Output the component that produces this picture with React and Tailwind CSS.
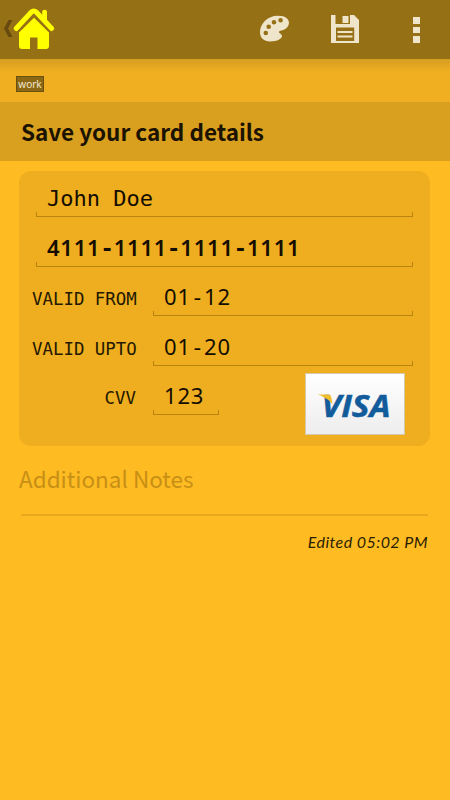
const Digits = ({ value }) => (
  <>
    {value.split(/(-)/).map((part, index) =>
      part === '-' ? (
        <span key={index} className="font-['DejaVu_Sans_Mono',monospace] tracking-normal">-</span>
      ) : (
        <span key={index}>{part}</span>
      )
    )}
  </>
);

// Holo style input, only the bottom edge with two short ticks
const Field = ({ children, className = '' }) => (
  <div className={`flex flex-col justify-end ${className}`}>
    <div className="-mb-[3px] whitespace-pre pl-[11px] leading-[30px] text-[#140d00]">{children}</div>
    <div className="h-[5px] border-x border-b border-[#b9830f]" />
  </div>
);

const Label = ({ children }) => (
  <span className="w-[104px] whitespace-pre pb-[5px] text-right font-['DejaVu_Sans_Mono',monospace] text-[17.4px] leading-6 text-[#241800]">
    {children}
  </span>
);

const Header = () => (
  <header className="flex h-[59px] items-start bg-[#967015]">
    <svg viewBox="0 0 56 59" className="h-[59px] w-14">
      <path d="M4 28.500 8.500 20H12.500L8 28.500l4.500 8.500H8.500Z" fill="#674b0e" />
      <path
        d="M16.200 28.500 31.200 12.200q2.600-2.400 5.200 0L51.700 28.500"
        fill="none"
        stroke="#ffff00"
        strokeWidth="5"
        strokeLinecap="round"
        strokeLinejoin="round"
      />
      <path d="M42.200 11.800q0-2 2.400-2t2.400 2v9.500l-4.800-4.800Z" fill="#ffff00" />
      <path d="M19 32.500 34 17.800l15 14.700V46q0 3-3 3h-8.500V37.500h-7.500V49h-8q-3 0-3-3Z" fill="#ffff00" />
    </svg>
    <div className="ml-auto flex">
      <svg viewBox="0 0 32 28" className="mt-[15px] mr-[41px] h-7 w-8" fill="#efe5ca">
        <path
          fillRule="evenodd"
          d="M20 .7C9 .7 2 9 2 17c0 6 4 9.500 10 9.500 7.500 0 12-3 12-5.500 0-2-3-2.500-3-4 0-2 4-1 7-3.500 5-4 4.500-12.800-8-12.800ZM22.600 3a2.300 2.300 0 1 1 0 4.600 2.300 2.300 0 0 1 0-4.600ZM16 4.900a2.300 2.300 0 1 1 0 4.600 2.300 2.300 0 0 1 0-4.600ZM10.700 9.400a2.300 2.300 0 1 1 0 4.600 2.300 2.300 0 0 1 0-4.600ZM7.800 15.700a2.300 2.300 0 1 1 0 4.600 2.300 2.300 0 0 1 0-4.600Z"
        />
      </svg>
      <svg viewBox="0 0 28 28" className="mt-[15px] mr-[54px] h-7 w-7">
        <path d="M0 0h4.500v9H19V0h4l5 5v23H0Z" fill="#efe5ca" />
        <path d="M11.500 1h6v7h-6Z" fill="#efe5ca" />
        <path d="M5 12.500h18.200v13.500H5Z" fill="#967015" />
        <path d="M6.500 17h15M6.500 21.500h15" stroke="#efe5ca" strokeWidth="2" />
      </svg>
      <div className="mt-[17px] mr-[30px] flex flex-col gap-[3px]">
        <span className="h-[6.500px] w-[7px] bg-[#efe5ca]" />
        <span className="h-[6.500px] w-[7px] bg-[#efe5ca]" />
        <span className="h-[6.500px] w-[7px] bg-[#efe5ca]" />
      </div>
    </div>
  </header>
);

const VisaCard = () => (
  <svg viewBox="0 0 100 62" className="mt-[7px] mr-[25px] h-[62px] w-[100px]">
    <defs>
      <linearGradient id="paper" x1="0" y1="0" x2="0" y2="1">
        <stop offset="0" stopColor="#ffffff" />
        <stop offset="1" stopColor="#ededed" />
      </linearGradient>
    </defs>
    <rect x="0.500" y="0.500" width="99" height="61" fill="url(#paper)" stroke="#d5c9aa" />
    <text
      x="16.500"
      y="43.500"
      textLength="69"
      lengthAdjust="spacingAndGlyphs"
      fill="#135c9c"
      fontFamily="Open Sans, sans-serif"
      fontSize="30"
      fontWeight="700"
      stroke="#135c9c"
      strokeWidth="0.500"
      fontStyle="italic"
    >
      VISA
    </text>
    <path d="M13 21.500h10q3 0 3.500 3.500l1 6q-3.500-4.500-7.500-6-3-2.500-7-3.500Z" fill="#f2bd2c" />
  </svg>
);

export default function App() {
  return (
    <div className="flex h-[800px] w-[450px] flex-col overflow-hidden bg-[#ffbb22] font-['Noto_Sans_CJK_SC',sans-serif]">
      <Header />
      <div className="flex h-[43px] items-start bg-linear-to-b from-[#d69d20] via-[#efaf21] via-30% to-[#efaf21] pt-[17px] pl-4">
        <span className="h-4 w-7 border border-[#69500f] bg-[#8c6815] text-center font-['Noto_Sans',sans-serif] text-[10px] leading-[14px] text-[#f0e6cc]">
          work
        </span>
      </div>
      <h1 className="h-[59px] bg-[#d99f1e] pl-[21px] text-[22.5px] leading-[58px] font-bold text-[#1b1200]">
        Save your card details
      </h1>

      <section className="mt-[10px] ml-[19px] flex h-[275px] w-[411px] flex-col rounded-xl bg-[#eeae20] font-['Noto_Sans',sans-serif]">
        <Field className="ml-[17px] h-[46px] w-[377px]">
          <span className="font-['DejaVu_Sans_Mono',monospace] text-[22px]">John Doe</span>
        </Field>
        <Field className="mt-[4px] ml-[17px] h-[46px] w-[377px]">
          <span className="text-[22px] font-semibold tracking-[0.770px]">
            <Digits value="4111-1111-1111-1111" />
          </span>
        </Field>
        <div className="ml-[13px] flex h-[49px] items-end">
          <Label>VALID FROM</Label>
          <Field className="ml-[17px] w-[260px]">
            <span className="text-[22px] tracking-[0.800px]"><Digits value="01-12" /></span>
          </Field>
        </div>
        <div className="ml-[13px] flex h-[50px] items-end">
          <Label>VALID UPTO</Label>
          <Field className="ml-[17px] w-[260px]">
            <span className="text-[22px] tracking-[0.800px]"><Digits value="01-20" /></span>
          </Field>
        </div>
        <div className="flex justify-between">
          <div className="ml-[13px] flex h-[49px] items-end">
            <Label>CVV</Label>
            <Field className="ml-[17px] w-[66px]">
              <span className="text-[22px] tracking-[0.800px]"><Digits value="123" /></span>
            </Field>
          </div>
          <VisaCard />
        </div>
      </section>

      <div className="mt-[13px] ml-[19px] text-[22.5px] leading-[38px] text-[#c78f15]">Additional Notes</div>
      <div className="mt-[17px] ml-[21px] h-[2px] w-[407px] bg-[#e9a91e]" />
      <div className="mt-[14px] mr-[22px] text-right font-['Lato',sans-serif] text-[16px] leading-6 tracking-[0.450px] text-[#2b1e02] italic">
        Edited 05:02 PM
      </div>
    </div>
  );
}
